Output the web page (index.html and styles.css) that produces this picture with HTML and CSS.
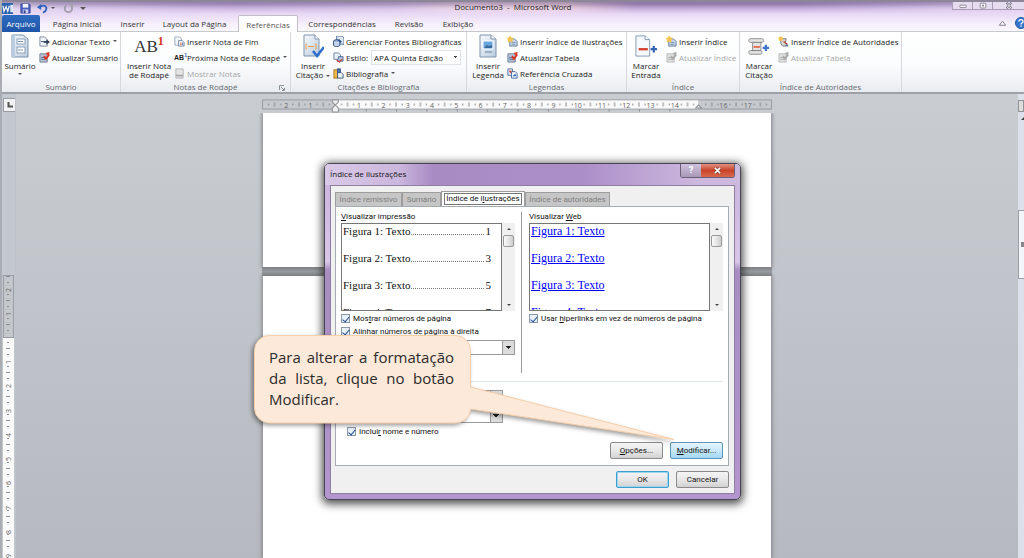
FILE: index.html
```html
<!DOCTYPE html>
<html lang="pt-BR">
<head>
<meta charset="utf-8">
<title>Documento3 - Microsoft Word</title>
<link rel="stylesheet" href="styles.css">
</head>
<body>
<svg class="defs" aria-hidden="true">
  <defs>
    <linearGradient id="paper" x1="0" y1="0" x2="1" y2="1"><stop offset="0" stop-color="#f7fafd"/><stop offset="1" stop-color="#b9cbdd"/></linearGradient>
    <symbol id="doc-refresh" viewBox="0 0 12 12"><path d="M1 2h6l2 2v7H1z" fill="#b9c4d4" stroke="#6a7c96"/><path d="M2.500 6h4M2.500 8h4" stroke="#4c668c"/><path d="M7 1l4.500-1L11 5z" fill="#d8311f"/><path d="M5.500 4.500l2 3L11 3" fill="none" stroke="#d8311f" stroke-width="2"/></symbol>
    <symbol id="doc-star" viewBox="0 0 12 12"><path d="M3 3h5l3 3v5H3z" fill="#c9d9ea" stroke="#5f7897"/><path d="M5 7h4M5 9h4" stroke="#6e8db4"/><path d="M3.500 0l1 2.200L7 2.600 5.300 4.300l.4 2.400-2.200-1.200-2.100 1.200.3-2.400L0 2.600l2.500-.4z" fill="#f3c34e" stroke="#f3c34e"/></symbol>
  </defs>
</svg>
<div class="window">
  <header class="titlebar">
    <div class="quick">
      <svg class="ico" viewBox="0 0 12 12"><rect x="0" y="0" width="12" height="12" fill="#2d63ad"/><rect x="9" y="2" width="3" height="8" fill="#dce8f7"/><path d="M1 3l1.200 6L4.500 4l1.800 5L8 3" fill="none" stroke="#fff" stroke-width="1.300"/></svg>
      <button class="bare save" aria-label="Salvar"><svg class="ico" viewBox="0 0 12 12"><path d="M1 1h9l1 1v9H1z" fill="#4b5fc4" stroke="#3a4796"/><rect x="3" y="1" width="6" height="4" fill="#f2f5fc"/><rect x="3" y="7" width="6" height="4" fill="#c9d2ee"/><rect x="4" y="8" width="2" height="3" fill="#2f3c86"/></svg></button>
      <button class="bare" aria-label="Desfazer"><svg class="ico" viewBox="0 0 12 12"><path d="M3 4.500C8 1 11 4 10 7c-.5 2-2 3-3.500 3.500" fill="none" stroke="#2e62bd" stroke-width="2"/><path d="M0 4.500L4.500 1v6.500z" fill="#2e62bd"/></svg></button>
      <span class="caret"></span>
      <button class="bare redo" aria-label="Refazer"><svg class="ico" viewBox="0 0 12 12"><path d="M9 3.500A4 4 0 1 1 4 2.500" fill="none" stroke="#a29dab" stroke-width="2"/><path d="M6 0h5v5z" fill="#a29dab"/></svg></button>
      <span class="caret bar"></span>
    </div>
    <h1>Documento3 &nbsp;-&nbsp; Microsoft Word</h1>
    <div class="winbtns">
      <button aria-label="Minimizar"><svg viewBox="0 0 12 10"><rect x="2" y="4" width="8" height="3" rx="1" fill="#fff" stroke="#777082"/></svg></button>
      <button aria-label="Restaurar"><svg viewBox="0 0 12 10"><rect x="2.500" y="1.500" width="7" height="6" rx="1" fill="#fff" stroke="#777082"/><path d="M6 3v3M4.500 4.500h3" stroke="#777082"/></svg></button>
      <button aria-label="Fechar"><svg viewBox="0 0 12 10"><path d="M3 1l6 7M9 1L3 8" stroke="#777082" stroke-width="2.600"/><path d="M3.500 1.500l5 6M8.500 1.500l-5 6" stroke="#fff"/></svg></button>
    </div>
  </header>
  <nav class="tabs">
    <button class="file">Arquivo</button>
    <button class="t1">Página Inicial</button>
    <button class="t2">Inserir</button>
    <button class="t3">Layout da Página</button>
    <button class="on">Referências</button>
    <button class="t4">Correspondências</button>
    <button class="t5">Revisão</button>
    <button class="t6">Exibição</button>
    <span class="help">
      <svg viewBox="0 0 10 8"><path d="M1.500 6.500L5 2l3.500 4.500z" fill="#fff" stroke="#77737f"/></svg>
      <svg class="q" viewBox="0 0 12 12"><circle cx="6" cy="6" r="5.500" fill="#3577cf" stroke="#1f58a6"/><path d="M4 4.500C4 2 8 2 8 4.500 8 6 6 6 6 7.500M6 8.500v1.300" fill="none" stroke="#fff" stroke-width="1.400"/></svg>
    </span>
  </nav>
  <div class="ribbon">
    <section class="group g1">
      <div class="tools">
        <button class="big"><svg viewBox="0 0 22 24"><path d="M3 1h11l5 4v18H3z" fill="url(#paper)" stroke="#7d93ad"/><path d="M3 1v22h3V1z" fill="#b9cde2"/><rect x="8" y="5" width="8" height="5" fill="#fff" stroke="#8ba1bb"/><rect x="8" y="13" width="8" height="6" fill="#fff" stroke="#8ba1bb"/><path d="M9 7.500h5M9 16h5" stroke="#7d93ad"/></svg><span>Sumário</span><i class="caret"></i></button>
        <div class="rows">
          <button><svg class="ico" viewBox="0 0 12 12"><path d="M1 1h5l3 3v7H1z" fill="#eef3f8" stroke="#7a8798"/><path d="M2 6h4" stroke="#4d5d74"/><path d="M5 6.500h4" stroke="#31425c" stroke-width="2"/><path d="M8 3.500l4 3-4 3z" fill="#31425c"/></svg>Adicionar Texto<i class="caret"></i></button>
          <button><svg class="ico"><use href="#doc-refresh"/></svg>Atualizar Sumário</button>
        </div>
      </div>
      <h2>Sumário</h2>
    </section>
    <section class="group g2">
      <div class="tools">
        <button class="big"><span class="ab">AB<sup>1</sup></span><span>Inserir Nota<br>de Rodapé</span></button>
        <div class="rows">
          <button><svg class="ico" viewBox="0 0 12 12"><path d="M1 1h5l2 2v7H1z" fill="#f5f8fc" stroke="#98a9bf"/><path d="M5 5h4l2 2v4H5z" fill="#fff" stroke="#6883a8"/><path d="M7.500 7v3" stroke="#d8311f"/><path d="M9.500 7v3" stroke="#3468b5"/></svg>Inserir Nota de Fim</button>
          <button><span class="ico abmini">AB<sup>1</sup></span>Próxima Nota de Rodapé<i class="caret"></i></button>
          <button disabled><svg class="ico" viewBox="0 0 12 12"><path d="M2 1h8v10H2z" fill="#e4e4e4" stroke="#b4b4b4"/><path d="M2 8h8" stroke="#8e8e8e"/><path d="M3 9.500h6" stroke="#bdbdbd"/></svg>Mostrar Notas</button>
        </div>
      </div>
      <h2>Notas de Rodapé</h2>
      <svg class="launch" viewBox="0 0 6 6"><path d="M.5 5V.5H5M2 2l3 3M5.500 3v2.500H3" fill="none" stroke="#8b9097"/></svg>
    </section>
    <section class="group g3">
      <div class="tools">
        <button class="big"><svg viewBox="0 0 22 24"><path d="M2 1h11l4 4v17H2z" fill="url(#paper)" stroke="#8095ae"/><path d="M13 1v4h4" fill="#fff" stroke="#8095ae"/><path d="M5 10H4v5h1M13 10h1v5h-1M6 12.500h6" fill="none" stroke="#ee9b50"/><path d="M11 17l4 5 7-9" fill="none" stroke="#2f6dcc" stroke-width="2.500"/></svg><span>Inserir<br>Citação<i class="caret"></i></span></button>
        <div class="rows">
          <button><svg class="ico" viewBox="0 0 12 12"><path d="M4 0h6l2 2v7H4z" fill="#dfe9f4" stroke="#4d6a92"/><ellipse cx="4" cy="6" rx="3.500" ry="2" fill="#8ca6cc" stroke="#2d4b7a"/><path d="M.5 6v4c0 2 7 2 7 0V6" fill="#c3d3e8" stroke="#2d4b7a"/><path d="M6 4l3 3" stroke="#24508f" stroke-width="2"/></svg>Gerenciar Fontes Bibliográficas</button>
          <div class="style-row"><svg class="ico" viewBox="0 0 12 12"><path d="M1 1h5l2 2v5H1z" fill="#eaf0f7" stroke="#6883a8"/><path d="M6 5h5v5H5z" fill="#a9bdd7" stroke="#557099"/><path d="M4 9l3 2 3-3" fill="none" stroke="#c8402b" stroke-width="1.300"/></svg><label for="estilo">Estilo:</label><select id="estilo"><option>APA Quinta Edição</option></select></div>
          <button><svg class="ico" viewBox="0 0 12 12"><rect x="1" y="2" width="4" height="9" fill="#f0b94a" stroke="#a8741d"/><rect x="5" y="1" width="3" height="6" fill="#4b78bb" stroke="#2d4b7a"/><path d="M5 5h4l2 2v4H5z" fill="#edf3fa" stroke="#35517b"/></svg>Bibliografia<i class="caret"></i></button>
        </div>
      </div>
      <h2>Citações e Bibliografia</h2>
    </section>
    <section class="group g4">
      <div class="tools">
        <button class="big"><svg viewBox="0 0 22 24"><path d="M3 1h11l5 4v18H3z" fill="url(#paper)" stroke="#8095ae"/><path d="M14 1v4h5" fill="#fff" stroke="#8095ae"/><rect x="6" y="7" width="10" height="8" fill="#67a5dd" stroke="#fff"/><path d="M7 14l3-3 2 1 3-1v3z" fill="#39699f"/><path d="M8 18h7" stroke="#6782a3"/></svg><span>Inserir<br>Legenda</span></button>
        <div class="rows">
          <button><svg class="ico"><use href="#doc-star"/></svg>Inserir Índice de Ilustrações</button>
          <button><svg class="ico"><use href="#doc-refresh"/></svg>Atualizar Tabela</button>
          <button><svg class="ico" viewBox="0 0 12 12"><path d="M1 1h5v7H1z" fill="#e5edf6" stroke="#557099"/><path d="M5 4h4l2 2v5H5z" fill="#fff" stroke="#3c639b"/><path d="M2 3h3l-1 3z" fill="#d8311f"/><path d="M6 9l3-3 1 3z" fill="#2e62bd"/></svg>Referência Cruzada</button>
        </div>
      </div>
      <h2>Legendas</h2>
    </section>
    <section class="group g5">
      <div class="tools">
        <button class="big"><svg viewBox="0 0 24 24"><path d="M1 1h10l5 4v18H1z" fill="#f6f9fc" stroke="#8095ae"/><path d="M11 1v4h5" fill="#fff" stroke="#8095ae"/><path d="M4 15.500h10" stroke="#d3402b" stroke-width="2.500"/><path d="M17 15.500h7M20.500 12v7" stroke="#3468b5" stroke-width="2.500"/></svg><span>Marcar<br>Entrada</span></button>
        <div class="rows">
          <button><svg class="ico"><use href="#doc-star"/></svg>Inserir Índice</button>
          <button disabled><svg class="ico gray"><use href="#doc-refresh"/></svg>Atualizar Índice</button>
        </div>
      </div>
      <h2>Índice</h2>
    </section>
    <section class="group g6">
      <div class="tools">
        <button class="big"><svg viewBox="0 0 24 24"><path d="M3 4h12c3 0 3 4 0 4h-1v9c2 0 2 4-1 4H3c-3 0-3-4 0-4h2V8H3C0 8 0 4 3 4z" fill="#e3e3e3" stroke="#8b8b8b"/><path d="M5 8h10M4 17h10" stroke="#777"/><path d="M6 13h7" stroke="#e36a4b" stroke-width="2"/><path d="M16 14h7M19.500 10.500v7" stroke="#3d75cc" stroke-width="2.500"/></svg><span>Marcar<br>Citação</span></button>
        <div class="rows">
          <button><svg class="ico" viewBox="0 0 12 12"><path d="M3 3h6l-1 4 3 4H5L3 8z" fill="#d8d8d8" stroke="#777"/><path d="M6 6l4 3" stroke="#c8402b" stroke-width="1.500"/><path d="M8 10h3" stroke="#3468b5"/><circle cx="3" cy="3" r="2.500" fill="#f3c34e"/></svg>Inserir Índice de Autoridades</button>
          <button disabled><svg class="ico gray"><use href="#doc-refresh"/></svg>Atualizar Tabela</button>
        </div>
      </div>
      <h2>Índice de Autoridades</h2>
    </section>
  </div>

  <main class="work">
    <aside class="left">
      <button class="tabstop" aria-label="Tabulação"><svg viewBox="0 0 6 6"><path d="M1.500 0v4.500H6" fill="none" stroke="#555" stroke-width="2"/></svg></button>
      <svg class="vruler" viewBox="0 0 11 288">
        <defs><pattern id="vt" width="11" height="24" y="61" patternUnits="userSpaceOnUse"><path d="M4 6.500h2M4 18.500h2M3 12.500h4" stroke="#8a8d92"/></pattern></defs>
        <rect x="0" y="0" width="11" height="288" fill="#fafafa"/><rect x="0.500" y="0.500" width="10" height="62" fill="#c3c7cc" stroke="#9a9ea4"/>
        <rect width="11" height="288" fill="url(#vt)"/>
        <g class="nums"><text transform="translate(8 15) rotate(-90)">2</text><text transform="translate(8 39) rotate(-90)">1</text><text transform="translate(8 87) rotate(-90)">1</text><text transform="translate(8 111) rotate(-90)">2</text><text transform="translate(8 136) rotate(-90)">3</text><text transform="translate(8 160) rotate(-90)">4</text><text transform="translate(8 184) rotate(-90)">5</text><text transform="translate(8 208) rotate(-90)">6</text><text transform="translate(8 233) rotate(-90)">7</text><text transform="translate(8 257) rotate(-90)">8</text><text transform="translate(8 281) rotate(-90)">9</text></g>
      </svg>
    </aside>
    <div class="canvas">
      <svg class="hruler" viewBox="0 0 504 13">
        <defs><pattern id="ht" width="24" height="10" patternUnits="userSpaceOnUse"><path d="M6.500 4v2M18.500 4v2M12.500 3v4" stroke="#85888d"/></pattern></defs>
        <rect x="0.500" y="0.500" width="503" height="9" fill="#c6cace" stroke="#9a9ea4"/><rect x="72" y="1" width="359" height="8" fill="#fafafa"/>
        <rect width="504" height="10" fill="url(#ht)"/>
        <path d="M103 10v2M133 10v2M163 10v2M193 10v2M223 10v2M253 10v2M283 10v2M313 10v2M343 10v2M373 10v2M403 10v2" stroke="#85888d"/>
        <g class="nums"><text x="24" y="8">2</text><text x="48" y="8">1</text><text x="96" y="8">1</text><text x="120" y="8">2</text><text x="144" y="8">3</text><text x="168" y="8">4</text><text x="192" y="8">5</text><text x="216" y="8">6</text><text x="240" y="8">7</text><text x="264" y="8">8</text><text x="288" y="8">9</text><text x="312" y="8">10</text><text x="336" y="8">11</text><text x="360" y="8">12</text><text x="384" y="8">13</text><text x="408" y="8">14</text><text x="456" y="8">16</text><text x="480" y="8">17</text></g>
        <path d="M69.500.5h6v2l-3 3-3-3zM72.500 5.500l3 3v4h-6v-4zM428.500 8.500l3-3 3 3z" fill="#eee" stroke="#8e9197"/>
      </svg>
      <div class="page first"></div>
      <div class="gap"></div>
      <div class="page second"></div>
    </div>
    <aside class="scroll"><span class="rul"></span><span class="up"></span><span class="thumb"></span></aside>
  </main>
</div>

<div class="dialog" role="dialog" aria-labelledby="dlg-title">
  <div class="dlg-title"><h2 id="dlg-title">Índice de ilustrações</h2>
    <div class="dlg-btns"><button aria-label="Ajuda">?</button><button class="close" aria-label="Fechar"><svg viewBox="0 0 10 8"><path d="M2 1l6 6M8 1L2 7" stroke="#6b2b20" stroke-width="3"/><path d="M2 1l6 6M8 1L2 7" stroke="#fff" stroke-width="2"/></svg></button></div>
  </div>
  <div class="dlg-body">
    <div class="dlg-tabs"><button class="d1">Índice remissivo</button><button class="d2">Sumário</button><button class="d3 on"><span>Índice de i<u>l</u>ustrações</span></button><button class="d4">Índice de autoridades</button></div>
    <div class="panel">
      <div class="cols">
        <div class="col print">
          <p class="cap"><u>V</u>isualizar impressão</p>
          <div class="preview">
            <ul><li>Figura 1: Texto<i></i>1</li><li>Figura 2: Texto<i></i>3</li><li>Figura 3: Texto<i></i>5</li><li>Figura 4: Texto<i></i>7</li></ul>
            <div class="sb"><b class="a-up"></b><b class="knob"></b><b class="a-down"></b></div>
          </div>
          <label class="check"><input type="checkbox" checked><span>Mos<u>t</u>rar números de página</span></label>
          <label class="check"><input type="checkbox" checked><span>A<u>l</u>inhar números de página à direita</span></label>
          <select class="fill" aria-label="Preenchimento"><option></option></select>
        </div>
        <div class="col web">
          <p class="cap">Visualizar <u>W</u>eb</p>
          <div class="preview">
            <ul><li><a href="#">Figura 1: Texto</a></li><li><a href="#">Figura 2: Texto</a></li><li><a href="#">Figura 3: Texto</a></li><li><a href="#">Figura 4: Texto</a></li></ul>
            <div class="sb"><b class="a-up"></b><b class="knob"></b><b class="a-down"></b></div>
          </div>
          <label class="check"><input type="checkbox" checked><span>Usar <u>h</u>iperlinks em vez de números de página</span></label>
        </div>
      </div>
      <div class="general">
        <select aria-label="Formatos"><option></option></select>
        <select aria-label="Nome da legenda"><option></option></select>
        <label class="check"><input type="checkbox" checked><span>Inclui<u>r</u> nome e número</span></label>
        <div class="actions"><button class="btn"><span><u>O</u>pções...</span></button><button class="btn hot"><span><u>M</u>odificar...</span></button></div>
      </div>
    </div>
    <div class="actions foot"><button class="btn default">OK</button><button class="btn">Cancelar</button></div>
  </div>
</div>

<div class="callout">
  <svg viewBox="0 0 424 108"><path d="M15.500.5h186a15 15 0 0 1 15 15V52L420 104.500 216.500 74a15 15 0 0 1-15 14h-186a15 15 0 0 1-15-15V15.500a15 15 0 0 1 15-15z" fill="#fde9d9" stroke="#f7cfa9"/></svg>
  <p>Para alterar a formatação da lista, clique no botão Modificar.</p>
</div>
</body>
</html>
```
FILE: styles.css
```css
* { box-sizing: border-box; }
html, body { height: 100%; margin: 0; overflow: hidden; }
body { font-family: "Open Sans", "Noto Sans", sans-serif; font-size: 8px; line-height: 9px; color: #222; position: relative; background: #c4c8cd; }
h1, h2, p, ul { margin: 0; padding: 0; font-weight: normal; font-size: inherit; }
button, select { font: inherit; color: inherit; border: 0; background: none; padding: 0; margin: 0; white-space: nowrap; }
select { appearance: none; }
ul { list-style: none; }
.defs { position: absolute; width: 0; height: 0; }
.window { height: 100%; display: flex; flex-direction: column; border-left: 2px solid #a9acb2; }
.ico { width: 11px; height: 11px; flex: none; display: block; }
.gray { filter: grayscale(1); opacity: .5; }
.caret { display: inline-block; border: 2px solid transparent; border-top-color: #555; border-bottom: 0; margin-left: 3px; vertical-align: middle; }
.rows .caret { margin-left: 1px; align-self: center; }

.titlebar { height: 14px; flex: none; display: grid; grid-template-columns: 1fr auto 1fr; border-top: 2px solid #8d8598;
  background: linear-gradient(transparent 20%, #ead9f6), linear-gradient(#7c6a9699, #d9c4ee00 60%), linear-gradient(90deg, #e0d5ea 0, #cdb9e2 10%, #b79ccf 22%, #c9b2dd 38%, #e9d0da 45%, #e9c8d0 55%, #a689c0 62%, #a98cc6 78%, #cdb8e2 92%, #d9cbe8); }
.quick { display: flex; align-items: center; gap: 6px; }
.quick .save { margin-left: 1px; }
.quick > .caret { margin: 0 2px 0 -3px; }
.quick > .bar { margin: 0; border-width: 3px; border-bottom: 0; }
.bare { display: block; }
.titlebar h1 { color: #222; line-height: 9px; }
.winbtns { display: flex; justify-content: flex-end; }
.winbtns button { width: 20px; height: 8px; border: 1px solid #ab9dba; border-top: 0; border-right: 0; display: flex; justify-content: center; background: #e6dcef; }
.winbtns button:last-child { width: 32px; }
.winbtns svg { width: 10px; height: 8px; }

.tabs { height: 18px; flex: none; display: flex; background: linear-gradient(#e8d9f5, #f6f0fb 60%, #f9f6fb); border-bottom: 1px solid #c5c8cd; padding-top: 1px; }
.tabs button { height: 17px; text-align: center; color: #333; }
.tabs .file { width: 38px; background: linear-gradient(#2e6bc0, #1f55a8); color: #fff; border-radius: 2px 2px 0 0; }
.tabs .t1 { width: 74px; } .tabs .t2 { width: 37px; } .tabs .t3 { width: 87px; }
.tabs .on { width: 60px; background: #fff; border: 1px solid #c3bccb; border-bottom: 0; border-radius: 2px 2px 0 0; color: #555; }
.tabs .t4 { width: 88px; } .tabs .t5 { width: 46px; } .tabs .t6 { width: 52px; }
.help { margin-left: auto; display: flex; align-items: center; gap: 8px; }
.help svg { width: 9px; height: 8px; }
.help .q { width: 12px; height: 12px; margin-right: -3px; }

.ribbon { height: 62px; flex: none; display: flex; background: linear-gradient(#fff, #fbfcfd 55%, #e9ecf0); border-bottom: 2px solid #9da1a6; }
.group { position: relative; border-right: 1px solid #d5d8dc; display: flex; flex-direction: column; padding-top: 1px; }
.g1 { width: 119px; } .g2 { width: 170px; } .g3 { width: 176px; } .g4 { width: 160px; } .g5 { width: 113px; } .g6 { width: 162px; }
.tools { flex: 1; display: flex; gap: 2px; padding-left: 1px; }
.g2 .tools { padding-left: 4px; gap: 1px; } .g3 .tools { padding-left: 4px; } .g4 .tools { padding-left: 4px; } .g5 .tools { padding-left: 2px; gap: 3px; } .g6 .tools { padding-left: 2px; }
.big { width: 34px; display: flex; flex-direction: column; align-items: center; }
.big > svg { width: 22px; height: 24px; margin: 1px 0 3px; }
.big > .caret { margin: 3px 0 0; }
.g2 .big { width: 48px; } .g3 .big { width: 36px; }
.ab { font: 17px/28px "Liberation Serif", serif; color: #333; }
.ab sup { font-size: 12px; font-weight: bold; line-height: 0; color: #d8311f; }
.abmini { font: bold 7px/11px "Liberation Sans", sans-serif; }
.abmini sup { font-size: 5px; line-height: 0; color: #2e62bd; }
.rows { display: flex; flex-direction: column; }
.rows > * { height: 16px; display: flex; align-items: center; gap: 2px; }
.rows button:disabled { color: #a4a6a9; }
.rows select { width: 90px; height: 15px; border: 1px solid #dfe2e6; padding-left: 2px; color: #111; margin-left: 1px;
  background: conic-gradient(from 315deg at bottom, #444 90deg, transparent 0) right 3px center / 4px 2px no-repeat, #fff; }
.group h2 { height: 10px; line-height: 10px; text-align: center; color: #666a70; }
.launch { position: absolute; right: 5px; bottom: 1px; width: 6px; height: 6px; }

.work { flex: 1; min-height: 0; display: flex; background: linear-gradient(#c9cdd2, #b6b9bf); }
.left { width: 14px; flex: none; display: flex; flex-direction: column; overflow: hidden; background: #c3c8cf; border-right: 1px solid #bfc3c9; }
.tabstop { width: 13px; height: 14px; margin: 4px 0 0 1px; flex: none; background: #f1f2f3; border: 1px solid #9a9ea4; display: grid; place-items: center; }
.tabstop svg { width: 6px; height: 6px; }
.vruler { width: 11px; height: 288px; flex: none; margin: 163px 0 0 1px; }
.nums { font-size: 7px; fill: #666; text-anchor: middle; }
.canvas { flex: 1; display: flex; flex-direction: column; align-items: center; padding-top: 5px; overflow: hidden; }
.hruler { width: 510px; height: 14px; flex: none; display: block; }
.page { width: 508px; background: #fff; box-shadow: 0 0 4px 1px #7d8086; flex: none; }
.first { height: 154px; clip-path: inset(0 -8px -8px -8px); }
.gap { width: 510px; height: 9px; flex: none; background: linear-gradient(#85888c, #9a9da1 50%, #85888c); }
.second { flex: 1 0 280px; }
.scroll { width: 6px; flex: none; background: #dce0ea; display: flex; flex-direction: column; align-items: flex-end; padding-top: 6px; }
.rul { width: 6px; height: 12px; border: 1px solid #8f9297; background: #ddd; }
.up { margin-top: 5px; border: 3px solid transparent; border-right: 0; border-top: 0; border-bottom-color: #444; }
.thumb { margin-top: 90px; width: 6px; height: 69px; border: 1px solid #9ba0a8; border-right: 0; background: linear-gradient(#888, #888) right center / 3px 5px no-repeat, #f2f5fa; }

.dialog { position: absolute; left: 324px; top: 163px; width: 417px; padding: 0 5px 5px; border: 1px solid #4a4454; border-radius: 5px; font-family: Roboto, "Open Sans", sans-serif; color: #111;
  background: linear-gradient(#c8b2dc, #d8c6e8 98px, #a78dc0 106px, #b296cd); box-shadow: 0 2px 8px 2px #222c; }
.dlg-title { height: 21px; display: flex; justify-content: space-between; margin: 0 -5px; padding: 0 5px; border-radius: 4px 4px 0 0; background: linear-gradient(90deg, #d9c9e6, #cbb6dd 18%, #a98bc4 26%, #ab8ec8 62%, #cdb8de 90%); }
.dlg-title h2 { line-height: 20px; font-family: "Open Sans", sans-serif; }
.dlg-btns { display: flex; height: 14px; border: 1px solid #6b5f78; border-top: 0; border-radius: 0 0 3px 3px; overflow: hidden; }
.dlg-btns button { width: 20px; background: linear-gradient(#cfc1dc, #a899b8); color: #fff; font-weight: bold; font-size: 9px; }
.dlg-btns .close { width: 33px; background: linear-gradient(#e0907e, #c8432a 50%, #d9694c); display: grid; place-items: center; }
.close svg { width: 9px; height: 7px; }
.dlg-body { background: #f0f0f0; border: 1px solid #8f7da3; padding: 5px 5px 5px 4px; }
.dlg-tabs { display: flex; align-items: flex-end; }
.dlg-tabs button { height: 14px; background: #c6c6c6; border: 1px solid #9d9d9d; border-bottom: 0; color: #808080; }
.dlg-tabs .d1 { width: 67px; } .dlg-tabs .d2 { width: 39px; } .dlg-tabs .d4 { width: 85px; }
.dlg-tabs .on { width: 84px; height: 15px; background: #fff; color: #111; padding: 1px 2px; }
.dlg-tabs .on span { display: block; border: 1px solid #777; line-height: 10px; }
.panel { background: #fff; border: 1px solid #a5abb5; height: 260px; padding: 5px 5px 6px; display: flex; flex-direction: column; }
.cols { display: flex; height: 161px; flex: none; }
.col { display: flex; flex-direction: column; }
.print { width: 181px; padding-right: 6px; border-right: 1px solid #9a9a9a; }
.web { flex: 1; padding-left: 7px; }
.cap { line-height: 10px; margin-bottom: 1px; white-space: nowrap; }
.preview { display: flex; height: 88px; margin-bottom: 1px; flex: none; }
.preview ul { flex: 1; border: 1px solid #777; overflow: hidden; font-family: "Liberation Serif", serif; font-size: 11px; }
.preview li { height: 27px; line-height: 15px; display: flex; padding: 0 10px 0 1px; }
.preview li i { flex: 1; height: 11px; border-bottom: 1px dotted #777; margin: 0 2px 0 1px; }
.web .preview li { font-size: 12px; }
.preview a { color: #00f; }
.sb { width: 13px; background: #f0f0f0; display: flex; flex-direction: column; align-items: center; padding: 5px 0; }
.a-up { border: 2px solid transparent; border-top: 0; border-bottom-color: #444; }
.a-down { border: 2px solid transparent; border-bottom: 0; border-top-color: #444; margin-top: auto; }
.knob { width: 11px; height: 12px; margin-top: 5px; border: 1px solid #999; border-radius: 2px; background: linear-gradient(90deg, #fafafa, #cfcfcf); }
.check { display: flex; align-items: center; gap: 3px; height: 13px; white-space: nowrap; }
.check input { appearance: none; margin: 0; width: 9px; height: 9px; border: 1px solid #8b98a8; background: #e8f0f8; display: grid; place-items: center; }
.check input:checked::before { content: ""; width: 3px; height: 6px; border: solid #234f96; border-width: 0 1px 1px 0; transform: rotate(40deg); }
.dialog select { height: 15px; border: 1px solid #999; background: conic-gradient(from 315deg at bottom, #222 90deg, transparent 0) right 3px center / 6px 3px no-repeat, linear-gradient(90deg, #999 1px, #dcdcdc 1px) right / 12px 100% no-repeat, #fff; }
.col .fill { width: 115px; margin: 2px 0 0 auto; }
.general { flex: 1; border-top: 1px solid #dde5ee; margin-top: 8px; display: flex; flex-direction: column; padding: 8px 0 0 6px; }
.general select { width: 110px; margin: 0 0 3px 46px; }
.general select + .check { margin-top: -1px; }
.actions { display: flex; justify-content: flex-end; gap: 7px; margin-top: auto; }
.btn { width: 53px; height: 17px; border: 1px solid #8b8b8b; border-radius: 2px; background: linear-gradient(#f4f4f4, #e8e8e8 50%, #d2d2d2); }
.hot { border-color: #5c93b8; background: linear-gradient(#e5f4fc, #c8e8f9 50%, #a3d7f3); }
.default { border-color: #3c9fd0; box-shadow: inset 0 0 0 1px #9bd6ee; }
.foot { margin-top: 5px; }

.callout { position: absolute; left: 254px; top: 335px; width: 217px; padding: 12px 17px 13px 15px; font: 15px/21px "Open Sans", "Noto Sans", sans-serif; color: #2b2b2b; }
.callout svg { position: absolute; left: 0; top: 0; width: 424px; height: 108px; filter: drop-shadow(-2px 2px 2px #0006); }
.callout p { position: relative; text-align: justify; }
```
